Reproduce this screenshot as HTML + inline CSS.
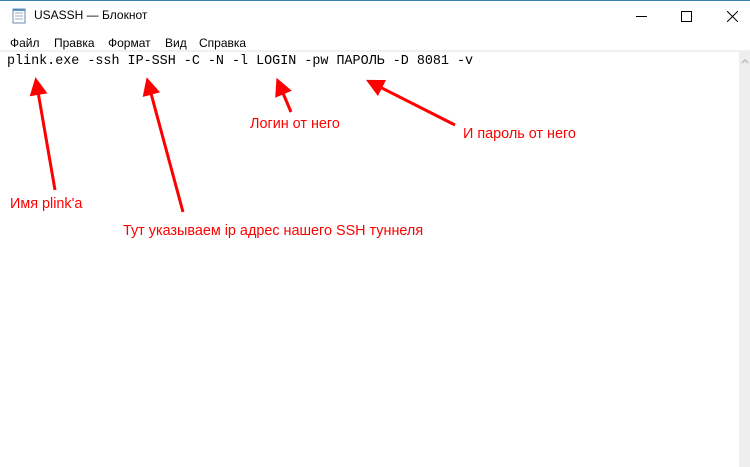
<!DOCTYPE html><html><head><meta charset="utf-8"><style>
body{margin:0;width:750px;height:467px;overflow:hidden;background:#fff;font-family:"Liberation Sans",sans-serif;position:relative}
.t{position:absolute;white-space:nowrap}
.r{font-size:14.4px;color:#f00}
</style></head><body>
<div style="position:absolute;left:0;top:0;width:750px;height:1px;background:#3a7fae"></div>
<svg class="t" style="left:11px;top:7px" width="16" height="18"><rect x="2" y="2" width="12" height="14" fill="#fff" stroke="#6a8bb0"/><path d="M4 6h8M4 9h8M4 12h8" stroke="#9ab"/><path d="M2 2h12v2H2z" fill="#5d8fc4"/></svg>
<div class="t" style="left:34px;top:8px;font-size:12px;color:#000">USASSH — Блокнот</div>
<div class="t" style="left:636px;top:16px;width:11px;height:1px;background:#000"></div>
<div class="t" style="left:681px;top:11px;width:9px;height:9px;border:1px solid #000"></div>
<svg class="t" style="left:727px;top:11px" width="11" height="11"><path d="M0 0L11 11M11 0L0 11" stroke="#000"/></svg>
<div class="t" style="left:10px;top:36px;font-size:12px">Файл</div>
<div class="t" style="left:54px;top:36px;font-size:12px">Правка</div>
<div class="t" style="left:108px;top:36px;font-size:12px">Формат</div>
<div class="t" style="left:165px;top:36px;font-size:12px">Вид</div>
<div class="t" style="left:199px;top:36px;font-size:12px">Справка</div>
<div class="t" style="left:0;top:50px;width:750px;height:2px;background:#f0f0f0"></div>
<div class="t" style="left:739px;top:52px;width:11px;height:415px;background:#eeeeee"></div>
<svg class="t" style="left:741px;top:58px" width="8" height="6"><path d="M1 5L4 2L7 5" stroke="#bbb" fill="none" stroke-width="1.5"/></svg>
<div class="t" style="left:7px;top:53px;font-family:'Liberation Mono',monospace;font-size:13.4px;line-height:18px;color:#000">plink.exe -ssh IP-SSH -C -N -l LOGIN -pw ПАРОЛЬ -D 8081 -v</div>
<svg class="t" style="left:0;top:0" width="750" height="467">
<defs><marker id="a" markerWidth="6" markerHeight="6" refX="3" refY="3" orient="auto"><path d="M0 0L6 3L0 6z" fill="#f00"/></marker></defs>
<g stroke="#f00" stroke-width="3" marker-end="url(#a)">
<line x1="55" y1="190" x2="37" y2="86"/>
<line x1="183" y1="212" x2="149" y2="86"/>
<line x1="291" y1="112" x2="280" y2="86"/>
<line x1="455" y1="125" x2="374" y2="84"/>
</g></svg>
<div class="t r" style="left:10px;top:196px">Имя plink'a</div>
<div class="t r" style="left:123px;top:223px">Тут указываем ip адрес нашего SSH туннеля</div>
<div class="t r" style="left:250px;top:116px">Логин от него</div>
<div class="t r" style="left:463px;top:126px">И пароль от него</div>
</body></html>
